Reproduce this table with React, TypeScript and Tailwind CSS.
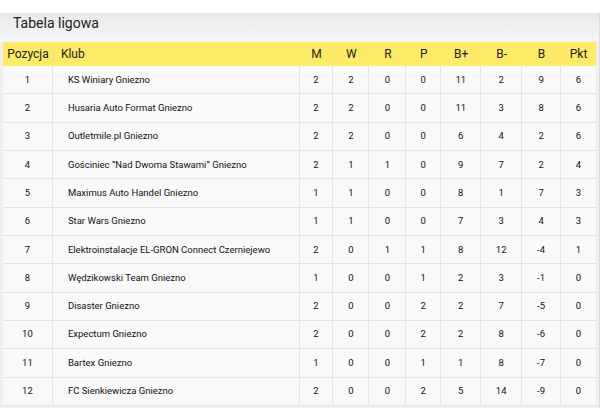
import React from "react";

const rows: [number, string, number, number, number, number, number, number, number, number][] = [
  [1, "KS Winiary Gniezno", 2, 2, 0, 0, 11, 2, 9, 6],
  [2, "Husaria Auto Format Gniezno", 2, 2, 0, 0, 11, 3, 8, 6],
  [3, "Outletmile.pl Gniezno", 2, 2, 0, 0, 6, 4, 2, 6],
  [4, "Gościniec “Nad Dwoma Stawami” Gniezno", 2, 1, 1, 0, 9, 7, 2, 4],
  [5, "Maximus Auto Handel Gniezno", 1, 1, 0, 0, 8, 1, 7, 3],
  [6, "Star Wars Gniezno", 1, 1, 0, 0, 7, 3, 4, 3],
  [7, "Elektroinstalacje EL-GRON Connect Czerniejewo", 2, 0, 1, 1, 8, 12, -4, 1],
  [8, "Wędzikowski Team Gniezno", 1, 0, 0, 1, 2, 3, -1, 0],
  [9, "Disaster Gniezno", 2, 0, 0, 2, 2, 7, -5, 0],
  [10, "Expectum Gniezno", 2, 0, 0, 2, 2, 8, -6, 0],
  [11, "Bartex Gniezno", 1, 0, 0, 1, 1, 8, -7, 0],
  [12, "FC Sienkiewicza Gniezno", 2, 0, 0, 2, 5, 14, -9, 0],
];

const numCols = ["M", "W", "R", "P", "B+", "B-", "B", "Pkt"];
const numW = ["w-[34px]", "w-[36px]", "w-[37px]", "w-[35px]", "w-[40px]", "w-[41px]", "w-[39px]", "w-[35px]"];

export default function App() {
  return (
    <div
      className="w-[600px] h-[408px] bg-white overflow-hidden"
      style={{ fontFamily: "Roboto, 'Liberation Sans', sans-serif" }}
    >
      <div className="mt-[13px] bg-[#efefef] px-[3px] h-[395px] border-r border-[#dcdcdc]">
        <div className="h-[29px] flex items-start pt-[1px] bg-gradient-to-b from-[#e9e9e9] to-[#f6f6f6] -mx-[3px] px-[13px]">
          <span className="text-[14px] text-[#222] leading-[18px]">Tabela ligowa</span>
        </div>
        <div className="flex h-[24px] bg-[#fdeb67] items-center text-[12px] text-[#222]">
          <div className="w-[50px] text-center">Pozycja</div>
          <div className="w-[247px] pl-[8px]">Klub</div>
          {numCols.map((c, i) => (
            <div key={c} className={`${numW[i]} text-center`}>{c}</div>
          ))}
        </div>
        <div className="bg-[#f9f9f9]">
          {rows.map((r) => (
            <div key={r[0]} className="flex h-[28.33px] items-center text-[9.5px] text-[#111] border-b border-[#e4e4e4]">
              <div className="w-[50px] h-full flex items-center justify-center border-r border-[#e4e4e4]">{r[0]}</div>
              <div className="w-[247px] h-full flex items-center pl-[15px] border-r border-[#e4e4e4]">{r[1]}</div>
              {r.slice(2).map((v, i) => (
                <div
                  key={i}
                  className={`${numW[i]} h-full flex items-center justify-center ${i < 7 ? "border-r border-[#e4e4e4]" : ""}`}
                >
                  {v}
                </div>
              ))}
            </div>
          ))}
        </div>
      </div>
    </div>
  );
}
